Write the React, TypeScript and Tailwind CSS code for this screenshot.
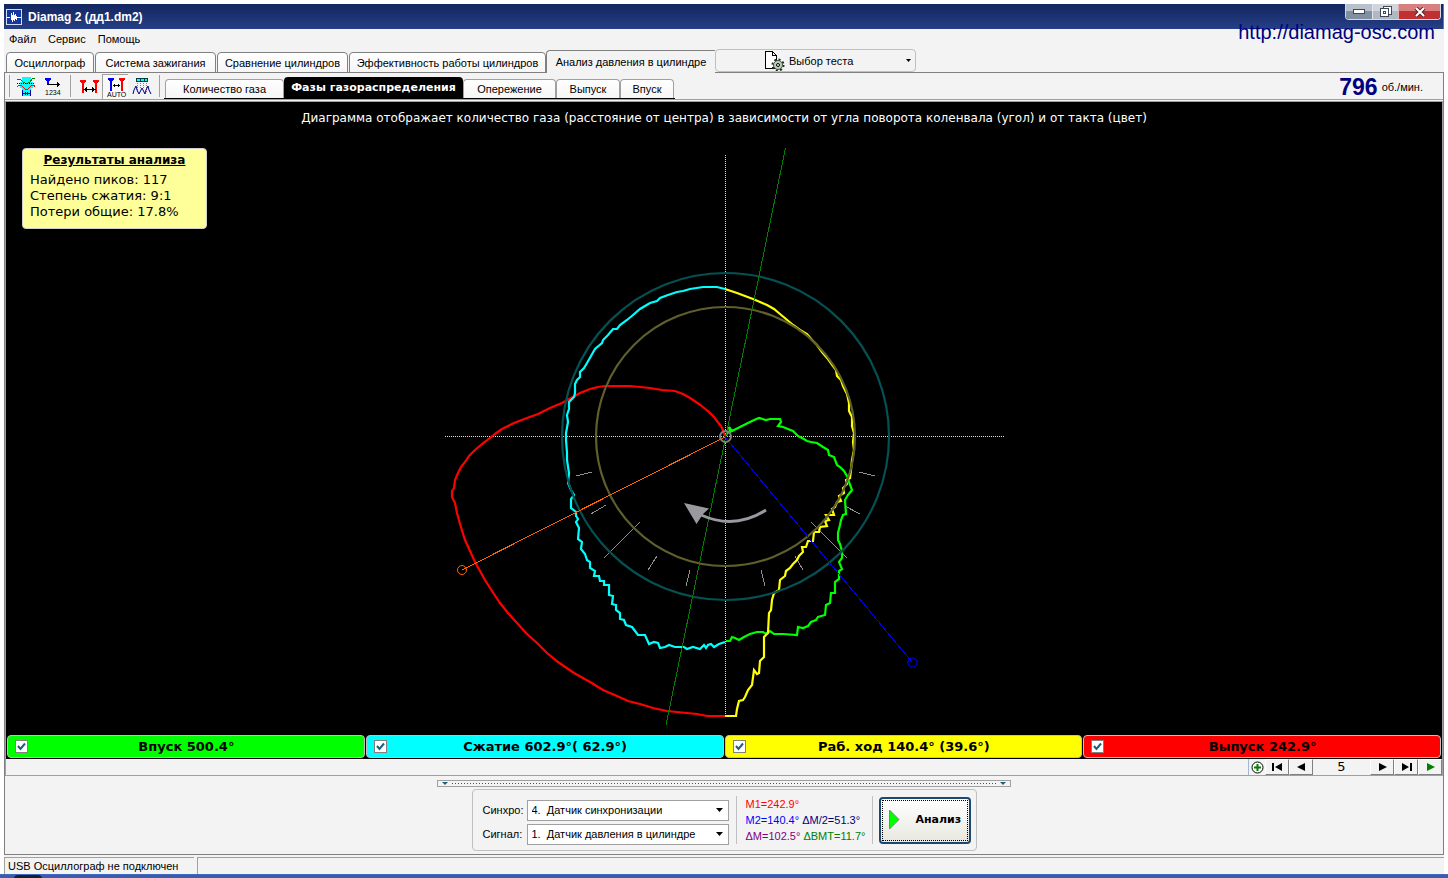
import { useState } from "react";

const RED =
  "725,436 722,428 720,425 714,417 709,412 699,404 690,398 683,394 675,391 662,390 650,388 630,386 605,386 598,387 590,389 580,393 573,397 562,403 550,408 538,414 527,418 514,423 502,429 495,434 490,438 482,444 475,450 469,456 465,462 461,467 458,473 455,480 454,488 452,491 452,497 455,503 457,513 460,524 465,540 470,551 475,562 480,571 485,580 492,591 500,603 508,613 517,623 526,633 537,643 547,653 558,662 574,673 590,682 603,690 617,696 628,701 640,704 653,708 667,711 687,713 697,714 707,716 725,716";

const CYAN =
  "725,289 717,287 703,287 690,289 683,291 677,292 668,295 660,298 657,301 650,303 640,309 633,315 627,320 620,325 617,329 613,329 608,335 603,340 602,343 595,349 591,356 587,363 584,368 580,372 580,377 577,380 575,384 575,393 574,397 571,400 569,402 569,409 567,415 568,422 566,433 566,440 567,453 567,460 569,473 568,483 571,490 574,495 571,499 571,508 576,512 576,516 578,519 576,522 579,528 578,539 582,542 581,549 585,554 587,560 590,562 590,568 595,571 594,576 599,576 600,581 604,581 604,585 609,585 609,595 613,596 612,604 616,605 616,610 620,613 620,619 624,620 626,625 632,627 635,631 638,635 645,635 649,644 654,642 658,643 660,648 665,647 669,645 675,647 684,647 687,649 693,647 700,649 704,645 706,648 708,645 711,644 714,647 719,644 725,642";

const YELLOW =
  "725,289 731,291 737,293 745,296 753,299 760,302 767,305 774,309 780,314 786,319 793,325 800,330 807,334 812,340 817,345 822,352 828,359 833,366 836,370 837,376 841,380 843,386 847,394 849,403 849,411 852,417 852,426 854,433 853,442 854,450 852,460 851,470 850,478 846,480 847,484 843,488 844,493 839,496 841,501 837,502 835,507 832,509 834,515 826,515 829,520 825,521 827,526 820,527 819,532 814,532 813,541 808,541 806,547 802,547 803,552 799,556 797,560 793,564 790,568 786,571 785,576 780,580 779,590 774,593 772,600 771,610 769,613 768,633 764,637 764,657 760,661 759,673 757,674 754,670 752,685 748,690 745,697 743,700 739,701 737,709 736,716 725,716";

const GREEN =
  "726,641 730,641 732,637 735,638 739,640 744,637 750,634 757,632 763,632 766,634 770,631 774,634 783,634 797,635 798,627 803,628 808,626 811,622 816,620 818,617 825,615 826,605 830,603 831,593 835,593 835,582 839,579 839,571 842,569 839,562 842,558 842,551 840,544 838,540 838,533 840,525 841,520 843,515 846,514 845,500 848,495 852,490 849,482 848,478 844,471 840,467 837,465 834,457 829,455 828,450 823,447 817,443 811,442 807,441 802,438 798,436 793,431 788,429 783,427 778,426 781,422 780,419 770,419 766,420 759,418 752,421 746,424 742,426 736,429 732,431 729,427 730,432 727,433 726,436";

const TICKS = [
  "M576 476L592 472",
  "M591 514L606 505",
  "M604 558L640 522",
  "M648 570L657 556",
  "M686 586L690 570",
  "M859 472L875 476",
  "M845 506L860 514",
  "M811 522L847 558",
  "M795 556L803 570",
  "M761 570L765 586",
];

const mainTabs = [
  { name: "Осциллограф", width: "w-[88px]" },
  { name: "Система зажигания", width: "w-[121px]" },
  { name: "Сравнение цилиндров", width: "w-[131px]" },
  { name: "Эффективность работы цилиндров", width: "w-[197px]" },
];

const subTabs = [
  { name: "Количество газа", width: "w-[119px]" },
  { name: "Фазы газораспределения", width: "w-[179px]" },
  { name: "Опережение", width: "w-[93px]" },
  { name: "Выпуск", width: "w-[64px]" },
  { name: "Впуск", width: "w-[54px]" },
];

const strokes = [
  { name: "Впуск 500.4°", color: "bg-[#00ff00]" },
  { name: "Сжатие 602.9°( 62.9°)", color: "bg-[#00ffff]" },
  { name: "Раб. ход 140.4° (39.6°)", color: "bg-[#ffff00]" },
  { name: "Выпуск 242.9°", color: "bg-[#ff0000]" },
];

function PhaseChart() {
  return (
    <svg className="block shrink-0" width="600" height="590" viewBox="425 140 600 590" fill="none">
      <g shapeRendering="crispEdges">
        <path d="M725.5 155V717M445 436.5H1004" stroke="#e0e0e0" strokeDasharray="1 1" />
        <g stroke="#909090">
          {TICKS.map((d) => (
            <path key={d} d={d} />
          ))}
        </g>
      </g>
      <g strokeWidth="2.2">
        <polyline points={RED} stroke="#ff0000" />
        <polyline points={CYAN} stroke="#00ffff" />
        <polyline points={GREEN} stroke="#00ff00" />
        <polyline points={YELLOW} stroke="#ffff00" />
        <circle cx="725.5" cy="436.5" r="163.5" stroke="#055053" />
        <circle cx="725.5" cy="436.5" r="129.5" stroke="#5f5f2d" />
      </g>
      <g shapeRendering="crispEdges">
        <path d="M785.5 148L666 725" stroke="#008000" />
        <path d="M725 437L462 570" stroke="#ff6600" />
        <path d="M725 437L912 662" stroke="#0000ff" />
      </g>
      <circle cx="462" cy="570" r="4.5" stroke="#ff6600" />
      <circle cx="912.5" cy="662.5" r="4.5" stroke="#0000ff" />
      <circle cx="725.5" cy="436.5" r="5.5" stroke="#808080" strokeWidth="2" />
      <path d="M701 515Q735 530 766 510" stroke="#99999f" strokeWidth="3" />
      <path d="M684 503L709 508.500L703 514L696.500 524Z" fill="#99999f" />
    </svg>
  );
}

function Toolbar() {
  return (
    <div className="flex h-[26px] items-center">
      <span className="h-[22px] w-px bg-[#a0a0a0]" />
      <button aria-label="Область" className="ml-1 h-6 w-7">
        <svg width="28" height="24" fill="none" shapeRendering="crispEdges">
          <path d="M8 3h9v5h2v6h-2v8H8v-8H6V8h2z" fill="#00ffff" />
          <path d="M3 5h2l2 1 2 2 2 1h3l2-1 2-3 2-1h1" stroke="#008000" />
          <path d="M3 13l2-2h2l2 2 2 2h3l2-2 2-2h2l1 2" stroke="#ff0000" />
          <path d="M3 9.500h18" stroke="#000" strokeDasharray="1 1" />
          <path d="M8.500 16v6M16.500 16v6M9 19.500h7M11.500 18v3M13.500 18v3" stroke="#0000a0" />
        </svg>
      </button>
      <button aria-label="Нумерация" className="h-6 w-6">
        <svg width="24" height="24" shapeRendering="crispEdges">
          <path d="M3 4h6v1L7 8v3H5V8L3 5z" fill="#0000ff" />
          <path d="M6 10.500h12M15 8v5M16 9v3" fill="none" stroke="#000" />
          <text x="3" y="21" className="font-['Liberation_Sans',sans-serif] text-[7px]">1234</text>
        </svg>
      </button>
      <span className="ml-1 h-[22px] w-px bg-[#a0a0a0]" />
      <button aria-label="Маркеры" className="ml-1 h-6 w-[27px]">
        <svg width="27" height="24" shapeRendering="crispEdges">
          <path d="M5 6h6v1L9 10v9H7v-9L5 7zM18 6h6v1l-2 3v9h-2v-9l-2-3z" fill="#ff0000" />
          <path d="M8 15.500h13M10.500 14v3M11.500 13v5M18.500 14v3M17.500 13v5" fill="none" stroke="#000" />
        </svg>
      </button>
      <button
        aria-label="Автоматические маркеры"
        className="h-[25px] w-[26px] border-t border-l border-[#a0a0a0] bg-[#f9f9f9]"
      >
        <svg width="25" height="24" shapeRendering="crispEdges">
          <path d="M5 3h6v1L9 7v9H7V7L5 4z" fill="#0000ff" />
          <path d="M16 3h6v1l-2 3v9h-2V7l-2-3z" fill="#ff0000" />
          <path d="M10 10.500h7M11.500 9v3M15.500 9v3" fill="none" stroke="#000" />
          <text x="4" y="22" className="font-['Liberation_Sans',sans-serif] text-[7px]">AUTO</text>
        </svg>
      </button>
      <button aria-label="Спектр" className="h-6 w-7">
        <svg width="28" height="24" fill="none" shapeRendering="crispEdges">
          <rect x="8.500" y="4.500" width="11" height="3" fill="#00ffff" stroke="#004040" />
          <path d="M12.500 5v3M16.500 5v3" stroke="#004040" />
          <path d="M9.500 9v9M12.500 9v6M15.500 9v6M18.500 9v9" stroke="#808080" strokeDasharray="1 1" />
          <path
            d="M5 20l1-4 2-4 1 4 2 4 1-2 2-4 2 4 1 2 1-4 2-4 1 4 2 4"
            stroke="#000080"
            shapeRendering="auto"
          />
        </svg>
      </button>
      <span className="ml-[3px] h-[22px] w-px bg-[#a0a0a0]" />
    </div>
  );
}

function SelectBox({ id, label, value }: { id: string; label: string; value: string }) {
  return (
    <div className="flex items-center">
      <label htmlFor={id} className="w-11">
        {label}
      </label>
      <div className="relative">
        <select
          id={id}
          className="block h-[21px] w-[202px] appearance-none border border-[#a0a0a0] bg-white px-1 text-[11px]"
        >
          <option>{value}</option>
        </select>
        <svg className="pointer-events-none absolute top-2 right-1.5" width="7" height="5">
          <path d="M0 0h7L3.500 4z" fill="#000" />
        </svg>
      </div>
    </div>
  );
}

const navButton =
  "flex h-4 w-6 items-center justify-center border-r border-b border-[#808080] border-t border-l border-t-white border-l-white bg-[#f3f3f3]";

export default function App() {
  const [tab, setTab] = useState("Фазы газораспределения");

  return (
    <div className="flex min-h-screen flex-col bg-white font-['Liberation_Sans',sans-serif] text-[11px] leading-4 text-black">
      <div className="mx-1 mt-1 flex flex-1 flex-col bg-[#f3f3f3]">
        <header className="relative flex h-[25px] items-center border-r border-[#6078c0] bg-linear-to-b from-[#12265f] to-[#263f86] pl-0.5">
          <svg width="16" height="16" shapeRendering="crispEdges">
            <rect width="16" height="16" fill="#d0dcf8" />
            <rect x="1" y="1" width="14" height="14" fill="#1438a0" />
            <path d="M1 8.500h3M5.500 4v7M6.500 6v7M7.500 3v8M8.500 6v6M9.500 5v5M10.500 7v4M11 8.500h4" fill="none" stroke="#fff" />
          </svg>
          <h1 className="ml-1.5 text-[12px] font-bold text-white">Diamag 2 (дд1.dm2)</h1>
          <div className="mr-0.5 ml-auto flex self-start overflow-hidden rounded-b border border-t-0 border-[#d5dae6]">
            <button
              aria-label="Свернуть"
              className="flex h-[15px] w-[26px] items-center justify-center bg-linear-to-b from-[#b8c0cc] from-50% to-[#8090a0] to-50%"
            >
              <svg width="12" height="5">
                <rect x="0.500" y="0.500" width="11" height="4" fill="#fff" stroke="#404858" />
              </svg>
            </button>
            <button
              aria-label="Восстановить"
              className="flex h-[15px] w-[26px] items-center justify-center border-l border-[#e0e4ea] bg-linear-to-b from-[#d0d5dc] from-50% to-[#b0b8c4] to-50%"
            >
              <svg width="12" height="12" fill="#fff" stroke="#404858">
                <rect x="3.500" y="0.500" width="8" height="8" />
                <rect x="0.500" y="2.500" width="8" height="8" />
                <rect x="3.500" y="5.500" width="2" height="2" />
              </svg>
            </button>
            <button
              aria-label="Закрыть"
              className="flex h-[15px] w-[42px] items-center justify-center border-l border-[#e0b0b0] bg-linear-to-b from-[#d88080] from-50% to-[#c03030] to-50%"
            >
              <svg width="12" height="10" fill="none">
                <path d="M2 1l8 8M10 1l-8 8" stroke="#502828" strokeWidth="4" />
                <path d="M2 1l8 8M10 1l-8 8" stroke="#fff" strokeWidth="2" />
              </svg>
            </button>
          </div>
          <a
            href="http://diamag-osc.com"
            className="absolute top-4 right-2 text-[20px] leading-6 text-[#000080]"
          >
            http://diamag-osc.com
          </a>
        </header>

        <nav className="flex h-5 items-center gap-3 pl-[5px]">
          <button>Файл</button>
          <button>Сервис</button>
          <button>Помощь</button>
        </nav>

        <div className="-mb-px flex items-end pl-0.5">
          {mainTabs.map((t) => (
            <button
              key={t.name}
              className={`${t.width} mr-px h-[21px] rounded-t border border-[#808080] bg-linear-to-b from-white to-[#f6f6f6] whitespace-nowrap`}
            >
              {t.name}
            </button>
          ))}
          <button className="relative -ml-px h-[23px] w-[169px] rounded-tl border-t border-l border-[#808080] bg-[#f3f3f3] whitespace-nowrap">
            Анализ давления в цилиндре
          </button>
          <button className="mb-px flex h-[23px] w-[201px] items-center rounded border border-[#c0c0c0]">
            <svg className="ml-12" width="21" height="20" shapeRendering="crispEdges">
              <path d="M1.500 0.500h7l4 4v13h-11zM8.500 0.500v4h4" fill="#fff" stroke="#000" />
              <g shapeRendering="auto">
                <circle cx="14" cy="14" r="5.500" fill="none" stroke="#202820" strokeWidth="2" strokeDasharray="2 2.300" />
                <circle cx="14" cy="14" r="4.500" fill="#b8d0b8" stroke="#405040" />
                <circle cx="14" cy="14" r="1.500" fill="#fff" stroke="#000" />
              </g>
            </svg>
            <span className="ml-1">Выбор теста</span>
            <svg className="mr-1 ml-auto" width="5" height="3">
              <path d="M0 0h5L2.500 3z" fill="#000" />
            </svg>
          </button>
        </div>

        <main className="flex flex-1 flex-col border border-[#808080]">
          <div className="flex h-[27px] items-end border-b border-[#a0a0a0] pl-1">
            <Toolbar />
            <div className="ml-1 flex items-end border-b border-black px-px">
              {subTabs.map((t) => (
                <button
                  key={t.name}
                  onClick={() => setTab(t.name)}
                  className={
                    t.name === tab
                      ? `${t.width} h-[21px] rounded-t bg-black font-['DejaVu_Sans',sans-serif] font-bold whitespace-nowrap text-white`
                      : `${t.width} h-[19px] rounded-t border border-b-0 border-[#a0a0a0] bg-linear-to-b from-white to-[#f6f6f6] whitespace-nowrap`
                  }
                >
                  {t.name}
                </button>
              ))}
            </div>
            <div className="mr-5 ml-auto flex items-center gap-1">
              <span className="text-[23px] leading-6 font-bold text-[#000080]">796</span>
              <span>об./мин.</span>
            </div>
          </div>

          <div className="mt-px flex flex-1 flex-col border-x border-t border-[#a0a0a0]">
            <div className="relative flex flex-1 flex-col items-center bg-black font-['DejaVu_Sans',sans-serif]">
              <p className="mt-2 text-[12px] leading-4 text-white">
                Диаграмма отображает количество газа (расстояние от центра) в зависимости от угла поворота
                коленвала (угол) и от такта (цвет)
              </p>
              <div className="mt-[14px] ml-0.5">
                <PhaseChart />
              </div>
              <section className="absolute top-[46px] left-4 h-[81px] w-[185px] rounded border border-[#d0d0d0] bg-[#ffff99] px-[7px] pt-[3px] text-[13px] leading-4">
                <h2 className="mb-1 text-center text-[12px] font-bold underline">Результаты анализа</h2>
                <p>Найдено пиков: 117</p>
                <p>Степень сжатия: 9:1</p>
                <p>Потери общие: 17.8%</p>
              </section>
              <div className="mt-auto mb-px grid w-full grid-cols-4 gap-px px-px">
                {strokes.map((s) => (
                  <label
                    key={s.name}
                    className={`${s.color} flex h-[23px] items-center rounded border border-[#c0c0c0] px-[7px] text-[13px] font-bold`}
                  >
                    <span className="relative">
                      <input
                        type="checkbox"
                        defaultChecked
                        className="peer block size-[13px] appearance-none border border-[#808080] bg-white"
                      />
                      <svg
                        className="pointer-events-none absolute top-0.5 left-0.5 hidden peer-checked:block"
                        width="9"
                        height="9"
                        fill="none"
                      >
                        <path d="M1 4l2.500 3L8 1.500" stroke="#1c6080" strokeWidth="2" />
                      </svg>
                    </span>
                    <span className="flex-1 pr-3 text-center">{s.name}</span>
                  </label>
                ))}
              </div>
            </div>

            <div className="flex h-[17px] justify-end border-b border-[#a0a0a0]">
              <button
                aria-label="Увеличить"
                className="flex h-4 w-[17px] items-center justify-center border-l border-[#a0b8d0]"
              >
                <svg width="13" height="13" fill="none">
                  <circle cx="6.500" cy="6.500" r="5.500" fill="#fff" stroke="#000" />
                  <path d="M6.500 3v7M3 6.500h7" stroke="#008000" strokeWidth="2" />
                </svg>
              </button>
              <button aria-label="В начало" className={navButton}>
                <svg width="11" height="8">
                  <path d="M0 0h2v8H0zM10 0v8L3 4z" />
                </svg>
              </button>
              <button aria-label="Назад" className={navButton}>
                <svg width="9" height="8">
                  <path d="M8 0v8L0 4z" />
                </svg>
              </button>
              <output className="w-[57px] text-center font-['DejaVu_Sans',sans-serif] text-[13px]">5</output>
              <button aria-label="Вперёд" className={navButton}>
                <svg width="9" height="8">
                  <path d="M1 0v8l8-4z" />
                </svg>
              </button>
              <button aria-label="В конец" className={navButton}>
                <svg width="11" height="8">
                  <path d="M9 0h2v8H9zM1 0v8l7-4z" />
                </svg>
              </button>
              <button aria-label="Пуск" className={navButton}>
                <svg width="9" height="8">
                  <path d="M1 0v8l8-4z" fill="#008000" />
                </svg>
              </button>
            </div>
          </div>

          <div className="flex flex-col items-center pt-1 pb-[3px]">
            <div className="flex h-[7px] w-[574px] items-center justify-between border border-[#a0a0a0] px-1">
              <svg width="6" height="3">
                <path d="M0 0h6L3 3z" fill="#1c6080" />
              </svg>
              <svg className="mx-1 h-px flex-1" shapeRendering="crispEdges">
                <line x2="100%" y1="0.500" y2="0.500" stroke="#1c6080" strokeDasharray="1 2" />
              </svg>
              <svg width="6" height="3">
                <path d="M0 0h6L3 3z" fill="#1c6080" />
              </svg>
            </div>
            <form className="mt-0.5 flex h-[62px] items-center rounded border border-[#c0c0c0] px-[5px] pl-[10px]">
              <div className="flex flex-col gap-[3px] pt-1">
                <SelectBox id="sync" label="Синхро:" value={"4.\u00a0 Датчик синхронизации"} />
                <SelectBox id="signal" label="Сигнал:" value={"1.\u00a0 Датчик давления в цилиндре"} />
              </div>
              <div className="mx-1.5 ml-[7px] w-[137px] border-x border-[#c0c0c0] pl-[9px] whitespace-nowrap">
                <p className="text-[#ff0000]">M1=242.9°</p>
                <p className="text-[#0000ff]">
                  M2=140.4° <span className="text-[#000080]">ΔM/2=51.3°</span>
                </p>
                <p className="text-[#800080]">
                  ΔM=102.5° <span className="text-[#008000]">ΔBMT=11.7°</span>
                </p>
              </div>
              <button
                type="button"
                className="flex h-[47px] w-[92px] items-center rounded-sm border-2 border-[#1c4870] bg-linear-to-b from-white to-[#e8e8e0] p-px"
              >
                <span className="flex size-full items-center border border-dotted border-black pl-1.5 font-['DejaVu_Sans',sans-serif] text-[11px] font-bold">
                  <svg width="11" height="20">
                    <path d="M0.500 0v19l9.500-9.500z" fill="#00ff00" stroke="#808080" />
                  </svg>
                  <span className="ml-4">Анализ</span>
                </span>
              </button>
            </form>
          </div>
        </main>

        <footer className="mt-0.5 flex h-[17px] gap-[3px]">
          <p className="w-[190px] border-t border-l border-[#a0a0a0] pl-[3px]">USB Осциллограф не подключен</p>
          <p className="flex-1 border-t border-l border-[#a0a0a0]" />
        </footer>
      </div>
      <div className="flex h-1 border-t border-[#4068c0] bg-[#3b5ca8]">
        <span className="ml-[14px] h-1 w-7 rounded-t-full bg-[#102030]" />
      </div>
    </div>
  );
}
